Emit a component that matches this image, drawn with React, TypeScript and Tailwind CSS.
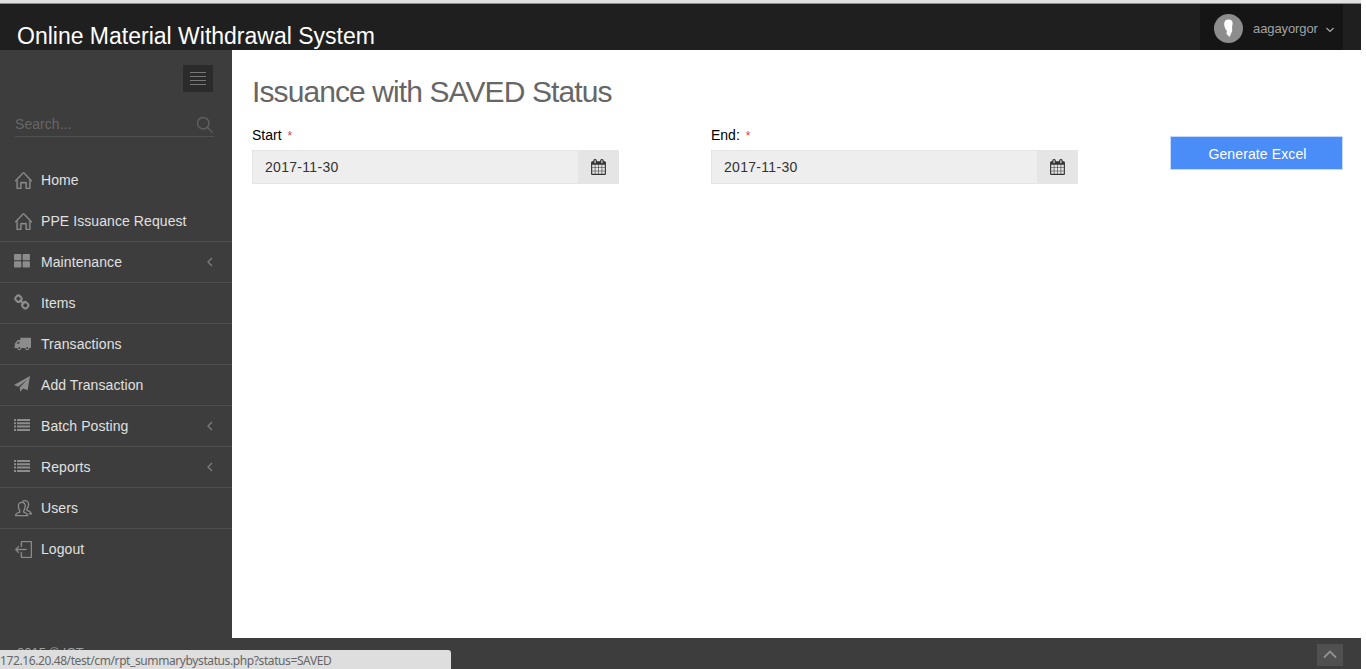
import React from "react";
import { SlHome, SlLogout, SlMagnifier } from "react-icons/sl";

type IconProps = { className?: string };

const Grid = ({ className }: IconProps) => (
  <svg className={className} viewBox="0 0 16 14" width="16" height="14" fill="currentColor">
    <rect x="0" y="0" width="7.3" height="6.2" rx=".8" />
    <rect x="8.6" y="0" width="7.3" height="6.2" rx=".8" />
    <rect x="0" y="7.3" width="7.3" height="6.2" rx=".8" />
    <rect x="8.6" y="7.3" width="7.3" height="6.2" rx=".8" />
  </svg>
);

const Chain = ({ className }: IconProps) => (
  <svg className={className} viewBox="0 0 16 16" width="16" height="16" fill="none" stroke="currentColor" strokeWidth="2">
    <rect x="1.700" y="1.700" width="5.600" height="6" rx="2.300" transform="rotate(-45 4.500 4.700)" />
    <rect x="8.400" y="8.200" width="5.600" height="6" rx="2.300" transform="rotate(-45 11.200 11.200)" />
    <path d="M5.500 5.700l4.700 4.600" />
  </svg>
);

const Truck = ({ className }: IconProps) => (
  <svg className={className} viewBox="0 0 16 13" width="17" height="14">
    <path fill="currentColor" fillRule="evenodd" d="M6 .6h9.400q.6 0 .6.6v8.300q0 .8-.8.8h-.8a2 2 0 0 1-4 0H7a2 2 0 0 1-4 0H.3V9.600l.5-.5V6L3.500 2.800H6zM2.300 6.300H5V4.200h-.8zM5 9.300a1 1 0 1 0 .01 0zm7.400 0a1 1 0 1 0 .01 0z" />
  </svg>
);

const Plane = ({ className }: IconProps) => (
  <svg className={className} viewBox="0 0 16 16" width="16" height="16" fill="currentColor">
    <path d="M16 0l-2.400 14.300-4.500-1.900L6.300 15.800 5.700 11.400 13.800 3 4.200 10.700 0 9z" />
  </svg>
);

const List = ({ className }: IconProps) => (
  <svg className={className} viewBox="0 0 16 12" width="16" height="12" fill="currentColor">
    <path d="M0 0h2v2H0zM3 0h13v2H3zM0 3.300h2v2H0zM3 3.300h13v2H3zM0 6.600h2v2H0zM3 6.600h13v2H3zM0 10h2v2H0zM3 10h13v2H3z" />
  </svg>
);

const Users = ({ className }: IconProps) => (
  <svg className={className} viewBox="0 0 17 17" width="17" height="17" fill="none" stroke="currentColor" strokeWidth="1.300">
    <path d="M.6 15.700c.1-2 .9-2.300 4.200-3.600v-1.300C3.600 9.300 3.400 7.700 3.400 5.900c0-2 1.300-3.500 3.400-3.500s3.400 1.500 3.400 3.500c0 1.800-.3 3.300-1.500 4.900v1.300c3 1.300 3.700 1.600 3.900 3.600z" />
    <path d="M7.300 1.600C8 .9 9 .7 9.900.7c2.100 0 3.700 1.500 3.700 3.600 0 1.800-.5 3.200-1.700 4.700v1.300c3 1.300 4.300 1.600 4.500 3.600h-2.800" />
  </svg>
);

const Calendar = ({ className }: IconProps) => (
  <svg className={className} viewBox="0 0 1664 1792" width="15" height="16" fill="currentColor">
    <path d="M128 1664h288v-288h-288v288zm352 0h320v-288h-320v288zm-352-352h288v-320h-288v320zm352 0h320v-320h-320v320zm-352-384h288v-288h-288v288zm736 736h320v-288h-320v288zm-384-736h320v-288h-320v288zm768 736h288v-288h-288v288zm-384-352h320v-320h-320v320zm-352-864v-288q0-13-9.500-22.500t-22.500-9.500h-64q-13 0-22.500 9.500t-9.500 22.500v288q0 13 9.500 22.500t22.500 9.500h64q13 0 22.500-9.500t9.500-22.500zm736 864h288v-320h-288v320zm-384-384h320v-288h-320v288zm384 0h288v-288h-288v288zm32-480v-288q0-13-9.500-22.500t-22.500-9.500h-64q-13 0-22.500 9.500t-9.500 22.500v288q0 13 9.500 22.500t22.500 9.500h64q13 0 22.500-9.500t9.500-22.500zm384-64v1280q0 52-38 90t-90 38h-1408q-52 0-90-38t-38-90v-1280q0-52 38-90t90-38h128v-96q0-66 47-113t113-47h64q66 0 113 47t47 113v96h384v-96q0-66 47-113t113-47h64q66 0 113 47t47 113v96h128q52 0 90 38t38 90z" />
  </svg>
);

type Item = { label: string; icon: React.ReactNode; line?: boolean; arrow?: boolean };

const items: Item[] = [
  { label: "Home", icon: <SlHome className="ml-px size-[17px]" stroke="currentColor" strokeWidth={25} /> },
  { label: "PPE Issuance Request", icon: <SlHome className="ml-px size-[17px]" stroke="currentColor" strokeWidth={25} />, line: true },
  { label: "Maintenance", icon: <Grid className="mb-0.5" />, line: true, arrow: true },
  { label: "Items", icon: <Chain className="mb-0.5" />, line: true },
  { label: "Transactions", icon: <Truck />, line: true },
  { label: "Add Transaction", icon: <Plane className="mb-0.5" />, line: true },
  { label: "Batch Posting", icon: <List className="mb-0.5" />, line: true, arrow: true },
  { label: "Reports", icon: <List className="mb-0.5" />, line: true, arrow: true },
  { label: "Users", icon: <Users className="ml-px" />, line: true },
  { label: "Logout", icon: <SlLogout className="ml-px size-[17px]" stroke="currentColor" strokeWidth={20} /> },
];

function DateField({ label, className }: { label: string; className: string }) {
  return (
    <div className={className}>
      <label className="flex h-5 items-center text-[14px] text-black">
        <span>{label}</span>
        <span className="mt-px ml-[6px] text-[12px] text-[#c9444f]">*</span>
      </label>
      <div className="mt-[5px] flex h-[34px] w-[367px] border border-[#e5e5e5] bg-[#eeeeee]">
        <div className="flex flex-1 items-center pl-3 text-[14px] tracking-[.3px] text-[#333]">2017-11-30</div>
        <button className="flex w-10 items-center justify-center bg-[#e5e5e5] pl-px text-[#333]">
          <Calendar className="mb-px" />
        </button>
      </div>
    </div>
  );
}

export default function App() {
  return (
    <div className="h-[669px] w-[1366px] overflow-hidden bg-white font-['Liberation_Sans',Arial,sans-serif]">
      <div className="flex h-full w-[1361px] flex-col">
        <div className="h-1 shrink-0 border-b border-[#8d8d8d] bg-[#e1e1e1]" />
        <header className="flex h-[46px] shrink-0 justify-between bg-[#1f1f1f]">
          <h1 className="pt-[17px] pl-[17px] text-[23px] leading-[30px] whitespace-nowrap text-white">Online Material Withdrawal System</h1>
          <div className="mr-[18px] flex h-[46px] w-[143px] items-center bg-[#151515] pl-[14px]">
            <svg className="mt-[3px]" width="29" height="29" viewBox="0 0 29 29">
              <circle cx="14.500" cy="14.500" r="14.500" fill="#8d8d8d" />
              <path fill="#fff" d="M14.500 5.500c3.200 0 4.500 2 4.100 4.500-.3 2-.5 2.800-.5 4.300 0 1 .2 1.400.2 2.500l-2.700 6.300-3-3.200.2-3.500c-1.800-1.500-2.600-4-2.600-6.700 0-2.700 1.700-4.200 4.300-4.200z" />
            </svg>
            <span className="mt-[3px] ml-[10px] text-[13px] tracking-[-.1px] text-[#a2a2a2]">aagayorgor</span>
            <svg className="mt-[5px] ml-[8px]" width="8" height="6" viewBox="0 0 8 6" fill="none" stroke="#aaa" strokeWidth="1.200">
              <path d="M.5 1l3.500 3.500L7.500 1" />
            </svg>
          </div>
        </header>
        <div className="flex h-[588px] shrink-0 bg-[#3d3d3d]">
          <aside className="w-[232px] shrink-0">
            <div className="flex justify-end pt-[15px] pr-[19px]">
              <button className="flex h-[27px] w-[30px] items-center justify-center bg-[#2b2b2b]">
                <svg width="16" height="14" viewBox="0 0 16 14" stroke="#777">
                  <path d="M0 .5h16M0 4.500h16M0 8.500h16M0 12.500h16" />
                </svg>
              </button>
            </div>
            <div className="mt-5 ml-[15px] flex h-[25px] w-[199px] items-center justify-between border-b border-[#515151] pr-px text-[14px] text-[#666]">
              <span className="tracking-[.05px]">Search...</span>
              <SlMagnifier className="mt-0.5 size-4" stroke="currentColor" strokeWidth={20} />
            </div>
            <nav className="mt-[23px]">
              {items.map((item) => (
                <a key={item.label} className={item.line ? "flex h-[41px] items-center border-b border-[#4f4f4f] pl-[14px]" : "flex h-[41px] items-center border-b border-transparent pl-[14px]"}>
                  <span className="flex w-[27px] shrink-0 text-[#8c8c8c]">{item.icon}</span>
                  <span className="flex-1 text-[14px] tracking-[.08px] text-[#e0e0e0]">{item.label}</span>
                  {item.arrow && (
                    <svg className="mr-[19px]" width="6" height="10" viewBox="0 0 6 10" fill="none" stroke="#7d7d7d" strokeWidth="1.300">
                      <path d="M5 1L1 5l4 4" />
                    </svg>
                  )}
                </a>
              ))}
            </nav>
          </aside>
          <main className="flex-1 bg-white pt-[22px] pl-5">
            <h2 className="text-[30px] leading-[40px] tracking-[-.9px] whitespace-nowrap text-[#666]">Issuance with SAVED Status</h2>
            <div className="mt-[13px] flex items-start">
              <DateField label="Start" className="w-[459px]" />
              <DateField label="End:" className="w-[459px]" />
              <button className="mt-[11px] h-[34px] w-[173px] border border-[#c5dafb] bg-[#4b8df8] pt-0.5 pl-0.5 text-[14px] tracking-[.12px] text-white">Generate Excel</button>
            </div>
          </main>
        </div>
        <footer className="relative flex h-[31px] shrink-0 justify-between bg-[#3d3d3d]">
          <div className="pt-[6px] pl-[17px] text-[13px] leading-[18px] text-[#a0a0a0]">2015 © ICT</div>
          <div className="mt-[6px] mr-[18px] flex h-[22px] w-[26px] items-center justify-center bg-[#505050] pb-0.5">
            <svg width="14" height="9" viewBox="0 0 14 9" fill="none" stroke="#929292" strokeWidth="1.800">
              <path d="M1 7.500l6-6 6 6" />
            </svg>
          </div>
          <div className="absolute bottom-0 left-0 flex h-[19px] w-[451px] items-center rounded-tr-[3px] bg-[#dedede] pt-0.5 font-['Noto_Sans',sans-serif] text-[12px] whitespace-nowrap text-[#666]">
            <span className="tracking-[-.4px]">172.16.20.48/test/cm/rpt_summarybystatus.php?status=SAVED</span>
          </div>
        </footer>
      </div>
    </div>
  );
}
